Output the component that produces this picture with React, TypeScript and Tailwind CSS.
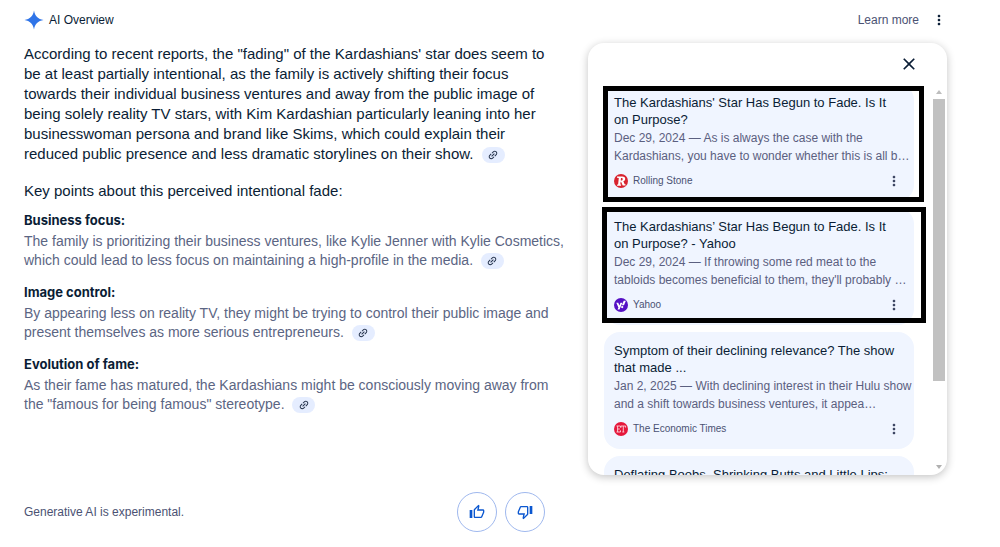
import React from "react";
import {
  MdClose,
  MdLink,
  MdMoreVert,
  MdOutlineThumbDown,
  MdOutlineThumbUp,
} from "react-icons/md";

type Source = {
  title: string;
  snippet: string;
  publisher: string;
  logo: React.ReactNode;
  frame?: string;
};

function RollingStoneLogo() {
  return (
    <svg viewBox="0 0 14 14" className="size-3.5" aria-hidden="true">
      <circle cx="7" cy="7" r="7" fill="#d8232f" />
      <path
        d="M3 2.6h5.2c2.2 0 3 .9 3 2.3 0 1.2-.8 2-1.900 2.300l1.400 3.100 1 .1-.2 1.200H8.700L7.100 7.800H6.600l-.3 2.600.9.200-.2 1.200H3l.2-1.200.9-.2.700-6.400-1.800-.2zM7 4.100l-.3 2.400h.7c.8 0 1.300-.5 1.300-1.300 0-.7-.4-1.100-1.100-1.100z"
        fill="#fff"
      />
    </svg>
  );
}

function YahooLogo() {
  return (
    <svg viewBox="0 0 14 14" className="size-3.5" aria-hidden="true">
      <circle cx="7" cy="7" r="7" fill="#5510c4" />
      <path
        d="M2.300 4.700h2l1.100 2.800 1.100-2.800h1.900L5.500 11.400H3.600l.8-1.800zM9.700 2.700h2.200L10 7.200H7.900zM8.200 7.900a1.150 1.150 0 1 1 0 2.300 1.150 1.150 0 0 1 0-2.300z"
        fill="#fff"
      />
    </svg>
  );
}

function EconomicTimesLogo() {
  return (
    <svg viewBox="0 0 14 14" className="size-3.5" aria-hidden="true">
      <circle cx="7" cy="7" r="7" fill="#e5173b" />
      <path
        d="M2.500 4h4v1.600M2.500 10h4V8.400M3.600 4v6M3.600 7h2.200M7 5.600V4h4.600v1.600M9.300 4v6M8.300 10h2"
        fill="none"
        stroke="#fbd5db"
        strokeWidth="0.9"
      />
    </svg>
  );
}

const sources: Source[] = [
  {
    title: "The Kardashians' Star Has Begun to Fade. Is It on Purpose?",
    snippet:
      "Dec 29, 2024 — As is always the case with the Kardashians, you have to wonder whether this is all b…",
    publisher: "Rolling Stone",
    logo: <RollingStoneLogo />,
    frame: "top-0.5 -left-px -right-2.5 -bottom-px",
  },
  {
    title: "The Kardashians’ Star Has Begun to Fade. Is It on Purpose? - Yahoo",
    snippet:
      "Dec 29, 2024 — If throwing some red meat to the tabloids becomes beneficial to them, they'll probably …",
    publisher: "Yahoo",
    logo: <YahooLogo />,
    frame: "-top-px -left-0.5 -right-3 bottom-0.5",
  },
  {
    title: "Symptom of their declining relevance? The show that made ...",
    snippet:
      "Jan 2, 2025 — With declining interest in their Hulu show and a shift towards business ventures, it appea…",
    publisher: "The Economic Times",
    logo: <EconomicTimesLogo />,
  },
  {
    title: "Deflating Boobs, Shrinking Butts and Little Lips:",
    snippet: "",
    publisher: "",
    logo: null,
  },
];

const points = [
  {
    heading: "Business focus:",
    text: "The family is prioritizing their business ventures, like Kylie Jenner with Kylie Cosmetics, which could lead to less focus on maintaining a high-profile in the media.",
  },
  {
    heading: "Image control:",
    text: "By appearing less on reality TV, they might be trying to control their public image and present themselves as more serious entrepreneurs.",
  },
  {
    heading: "Evolution of fame:",
    text: 'As their fame has matured, the Kardashians might be consciously moving away from the "famous for being famous" stereotype.',
  },
];

function CitationButton() {
  return (
    <button
      type="button"
      aria-label="View related links"
      className="ml-1 inline-flex h-4 w-[23px] items-center justify-center rounded-full bg-[#e5edff] align-middle text-[#22304a]"
    >
      <MdLink className="size-3 -rotate-45" />
    </button>
  );
}

function SourceCard({ source }: { source: Source }) {
  return (
    <li className="relative flex h-[117px] shrink-0 flex-col rounded-2xl bg-[#f0f5ff] px-2.5 pt-2.5">
      <a href="#source" className="pr-1 text-[13px] leading-[17px] text-[#0a1d35]">
        {source.title}
      </a>
      <p className="mt-px -mr-2 text-xs leading-[18px] text-[#5b6080]">{source.snippet}</p>
      {source.publisher && (
        <div className="mt-2 flex items-center gap-[5px] text-[10px] leading-4 text-[#4b5273]">
          {source.logo}
          <span className="flex-1">{source.publisher}</span>
          <button type="button" aria-label={`About ${source.publisher}`} className="mr-0.5 text-[#3a4360]">
            <MdMoreVert className="size-4" />
          </button>
        </div>
      )}
      {source.frame && (
        <div className={`pointer-events-none absolute border-5 border-black ${source.frame}`} />
      )}
    </li>
  );
}

function SourcesPanel() {
  return (
    <aside className="flex h-[432px] w-[359px] shrink-0 flex-col overflow-hidden rounded-2xl bg-white shadow-[0_2px_9px_rgba(0,0,0,0.24)]">
      <div className="flex h-[43px] shrink-0 items-center justify-end pr-7 pb-0.5">
        <button type="button" aria-label="Close" className="text-[#0a1d35]">
          <MdClose className="size-5" />
        </button>
      </div>
      <div className="flex min-h-0 flex-1">
        <div className="min-w-0 flex-1 overflow-hidden pl-4">
          <ul className="-mt-0.5 mr-[19px] flex flex-col gap-[7px]">
            {sources.map((source) => (
              <SourceCard key={source.title} source={source} />
            ))}
          </ul>
        </div>
        <div className="mr-0.5 flex w-3 flex-col items-center" aria-hidden="true">
          <svg viewBox="0 0 12 13" className="h-[13px] w-3">
            <path d="M3 8l3-4 3 4z" fill="#bdbdbd" />
          </svg>
          <div className="h-[282px] w-3 bg-[#c1c1c1]" />
          <svg viewBox="0 0 12 13" className="mt-auto mb-0.5 h-[13px] w-3">
            <path d="M3 5l3 4 3-4z" fill="#b0b0b0" />
          </svg>
        </div>
      </div>
    </aside>
  );
}

export default function App() {
  return (
    <main className="bg-white pr-[53px] pl-6 font-['Liberation_Sans',Arial,sans-serif] text-[#0a1d35]">
      <header className="flex h-[43px] items-center pb-1">
        <svg viewBox="0 0 20 20" className="size-5" aria-hidden="true">
          <path
            d="M10 .5c.9 5.400 4.100 8.600 9.500 9.500-5.400.9-8.600 4.100-9.500 9.500C9.100 14.100 5.900 10.900.5 10 5.900 9.100 9.100 5.900 10 .5z"
            fill="#2f74e8"
          />
        </svg>
        <h1 className="ml-[5px] flex-1 text-xs">AI Overview</h1>
        <a href="#learn-more" className="text-xs text-[#4b5273]">
          Learn more
        </a>
        <button type="button" aria-label="More options" className="ml-3">
          <MdMoreVert className="size-4" />
        </button>
      </header>

      <div className="flex gap-5">
        <article className="min-w-0 flex-1 pt-px">
          <p className="pr-3 text-[15px] leading-5">
            According to recent reports, the "fading" of the Kardashians' star does seem to be at least
            partially intentional, as the family is actively shifting their focus towards their individual
            business ventures and away from the public image of being solely reality TV stars, with Kim
            Kardashian particularly leaning into her businesswoman persona and brand like Skims, which could
            explain their reduced public presence and less dramatic storylines on their show.{" "}
            <CitationButton />
          </p>
          <p className="mt-[17px] text-[15px] leading-5">
            Key points about this perceived intentional fade:
          </p>
          <ul className="mt-[9px] flex flex-col gap-3">
            {points.map((point) => (
              <li key={point.heading}>
                <h2 className="mb-0.5 font-['Inter',sans-serif] text-[13px] leading-5 font-bold">
                  {point.heading}
                </h2>
                <p className="text-sm leading-[19px] text-[#5b6583]">
                  {point.text} <CitationButton />
                </p>
              </li>
            ))}
          </ul>
        </article>
        <SourcesPanel />
      </div>

      <footer className="mt-[17px] flex items-center text-xs text-[#4b5273]">
        <p className="w-[433px]">Generative AI is experimental.</p>
        <div className="flex gap-2 text-[#0b57d0]">
          <button
            type="button"
            aria-label="Good response"
            className="flex size-10 items-center justify-center rounded-full border border-[#9fb8ee]"
          >
            <MdOutlineThumbUp className="size-4" />
          </button>
          <button
            type="button"
            aria-label="Bad response"
            className="flex size-10 items-center justify-center rounded-full border border-[#9fb8ee]"
          >
            <MdOutlineThumbDown className="size-4" />
          </button>
        </div>
      </footer>
    </main>
  );
}
